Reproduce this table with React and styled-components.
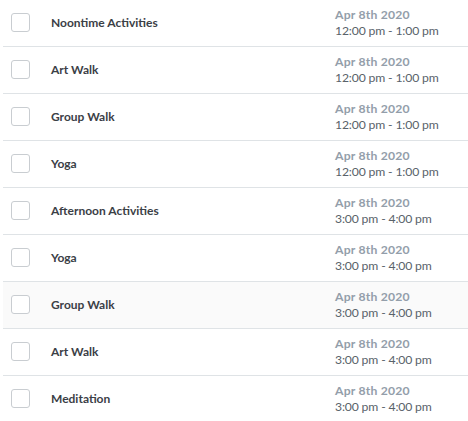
import React from 'react';
import styled, { createGlobalStyle } from 'styled-components';

const GlobalStyle = createGlobalStyle`
    body {
        margin: 0;
        background: #fff;
        font-family: Lato, "Liberation Sans", sans-serif;
    }
`

const List = styled.div`
    margin-left: 3px;
`

const Row = styled.div`
    display: flex;
    align-items: center;
    height: 46px;
    border-bottom: 1px solid #dfe3e6;
    background: ${p => (p.$hover ? '#fafafa' : '#fff')};
`

const CheckBox = styled.span`
    box-sizing: border-box;
    width: 19px;
    height: 19px;
    margin-left: 8px;
    margin-top: -1px;
    border: 1px solid #c9cdd1;
    border-radius: 3px;
    background: #fff;
    flex: none;
`

const Title = styled.div`
    flex: 1;
    margin-left: 21px;
    margin-top: -1px;
    font-size: 12px;
    font-weight: 700;
    color: #3b4046;
`

const When = styled.div`
    width: 133px;
    line-height: 16px;
    margin-top: -1px;
    font-size: 12.2px;
    .date {
        letter-spacing: 0.2px;
        color: #939eaa;
        font-weight: 700;
    }
    .time {
        letter-spacing: -0.15px;
        color: #59626a;
    }
`

const events = [
    { title: 'Noontime Activities', time: '12:00 pm - 1:00 pm' },
    { title: 'Art Walk', time: '12:00 pm - 1:00 pm' },
    { title: 'Group Walk', time: '12:00 pm - 1:00 pm' },
    { title: 'Yoga', time: '12:00 pm - 1:00 pm' },
    { title: 'Afternoon Activities', time: '3:00 pm - 4:00 pm' },
    { title: 'Yoga', time: '3:00 pm - 4:00 pm' },
    { title: 'Group Walk', time: '3:00 pm - 4:00 pm', hover: true },
    { title: 'Art Walk', time: '3:00 pm - 4:00 pm' },
    { title: 'Meditation', time: '3:00 pm - 4:00 pm' },
]

export default function App() {
    return (
        <>
            <GlobalStyle />
            <List>
                {events.map((ev, i) => (
                    <Row key={i} $hover={ev.hover}>
                        <CheckBox />
                        <Title>{ev.title}</Title>
                        <When>
                            <div className="date">Apr 8th 2020</div>
                            <div className="time">{ev.time}</div>
                        </When>
                    </Row>
                ))}
            </List>
        </>
    )
}
